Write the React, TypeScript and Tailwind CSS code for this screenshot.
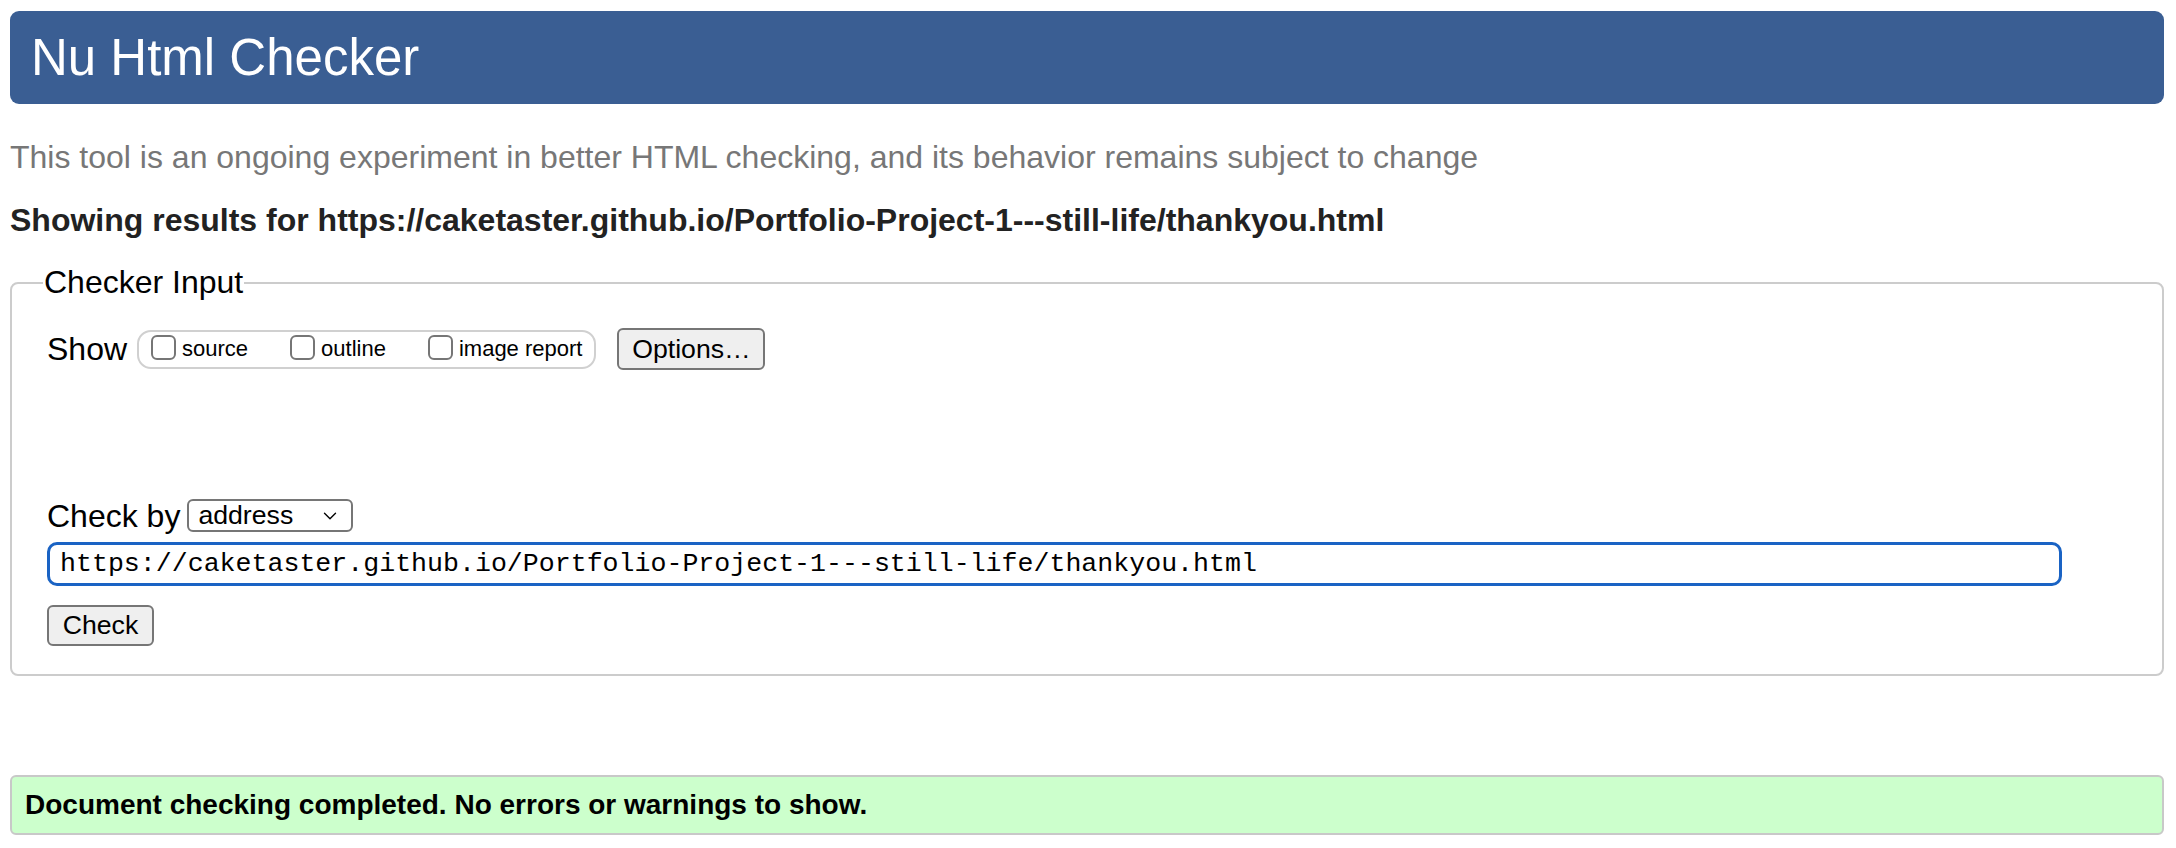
import { ChevronDown } from 'lucide-react';

const url = 'https://caketaster.github.io/Portfolio-Project-1---still-life/thankyou.html';

function Box({ label }: { label: string }) {
  return (
    <label className="flex items-center gap-[6px]">
      <span className="w-[25px] h-[25px] -mt-[4px] rounded-[6px] border-2 border-[#767676] bg-white" />
      <span className="text-[22px] leading-none text-black">{label}</span>
    </label>
  );
}

export default function App() {
  return (
    <div className="min-h-[848px] bg-white pl-[10px] pr-[12px] pt-[11px] pb-[6px] font-['Liberation_Sans',Arial,sans-serif] text-black">
      <header className="h-[93px] rounded-[9px] bg-[#3a5e93] flex items-center pl-[21px]">
        <h1 className="text-[51px] leading-none text-white">Nu Html Checker</h1>
      </header>

      <p className="mt-[35px] text-[32px] leading-[37px] text-[#777]">
        This tool is an ongoing experiment in better HTML checking, and its behavior remains subject to change
      </p>
      <p className="mt-[26px] text-[32px] leading-[37px] font-bold text-[#222]">
        Showing results for {url}
      </p>

      <fieldset className="mt-[25px] rounded-[8px] border-2 border-[#cccccc] pl-[35px] pr-[35px] pb-[28px]">
        <legend className="-ml-[4px] px-[1px] text-[32px] leading-[37px]">Checker Input</legend>

        <div className="mt-[27px] flex items-center">
          <span className="text-[32px] leading-none">Show</span>
          <div className="ml-[10px] h-[39px] flex items-center gap-[42px] rounded-[14px] border-2 border-[#d0d0d0] px-[12px]">
            <Box label="source" />
            <Box label="outline" />
            <Box label="image report" />
          </div>
          <button className="ml-[21px] h-[42px] w-[148px] rounded-[6px] border-2 border-[#767676] bg-[#efefef] text-[26.67px] leading-none">
            Options…
          </button>
        </div>

        <div className="mt-[129px] flex items-center">
          <span className="text-[32px] leading-none">Check by</span>
          <div className="ml-[7px] h-[33px] w-[166px] flex items-center justify-between rounded-[6px] border-2 border-[#767676] bg-white pl-[9px] pr-[10px]">
            <span className="text-[26.67px] leading-none">address</span>
            <ChevronDown className="w-[22px] h-[22px]" strokeWidth={1.5} />
          </div>
        </div>

        <input
          readOnly
          value={url}
          className="mt-[10px] block h-[44px] w-[2015px] rounded-[10px] border-[3px] border-[#1a63c4] bg-white pl-[10px] font-['Liberation_Mono',monospace] text-[26.6px] text-black outline-none"
        />

        <button className="mt-[19px] block h-[41px] w-[107px] rounded-[6px] border-2 border-[#767676] bg-[#efefef] text-[26.67px] leading-none">
          Check
        </button>
      </fieldset>

      <div className="mt-[99px] h-[60px] flex items-center rounded-[6px] border-2 border-[#c8c8c8] bg-[#ccffcc] pl-[13px]">
        <p className="text-[28px] font-bold leading-none">Document checking completed. No errors or warnings to show.</p>
      </div>
    </div>
  );
}
